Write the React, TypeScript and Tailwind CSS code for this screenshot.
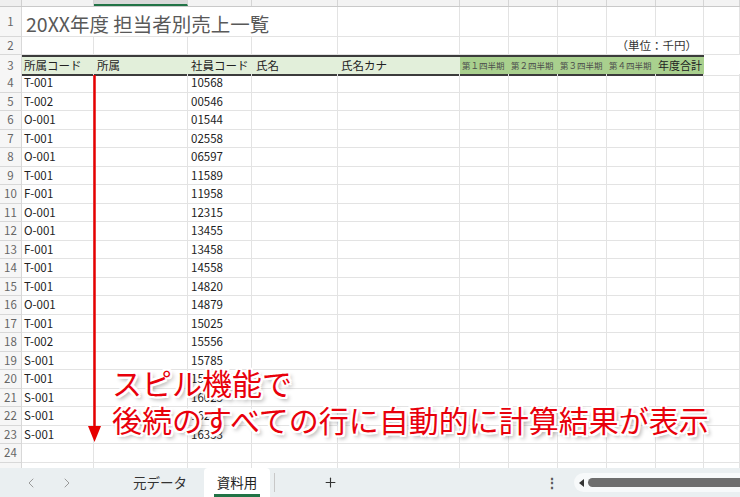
import React from 'react';
import { ChevronLeft, ChevronRight, Plus } from 'lucide-react';

const COLS = 'grid grid-cols-[22px_72px_94px_64px_86px_122px_49px_49px_49px_49px_48px_1fr]';
const FONT = "font-['Noto_Sans_CJK_JP','Noto_Sans',sans-serif]";

const rows: [string, string][] = [
  ['T-001', '10568'],
  ['T-002', '00546'],
  ['O-001', '01544'],
  ['T-001', '02558'],
  ['O-001', '06597'],
  ['T-001', '11589'],
  ['F-001', '11958'],
  ['O-001', '12315'],
  ['O-001', '13455'],
  ['F-001', '13458'],
  ['T-001', '14558'],
  ['T-001', '14820'],
  ['O-001', '14879'],
  ['T-001', '15025'],
  ['T-002', '15556'],
  ['S-001', '15785'],
  ['T-001', '15898'],
  ['S-001', '16025'],
  ['S-001', '16258'],
  ['S-001', '16353'],
];

const quarters = ['第１四半期', '第２四半期', '第３四半期', '第４四半期'];

const Cell: React.FC<{ children?: React.ReactNode; className?: string }> = ({ children, className = '' }) => (
  <div
    className={`border-r border-b border-[#e3e3e3] px-[2px] flex items-center overflow-hidden whitespace-nowrap text-[11.5px] text-[#222] ${className}`}
  >
    {children}
  </div>
);

const RowNum: React.FC<{ n?: number }> = ({ n }) => (
  <div className="border-r border-b border-[#d8d8d8] bg-[#f6f6f6] flex items-center justify-center text-[11.5px] text-[#666]">
    {n}
  </div>
);

const EmptyCells: React.FC<{ count: number }> = ({ count }) => (
  <>
    {Array.from({ length: count }).map((_, i) => (
      <Cell key={i} />
    ))}
  </>
);

export default function App() {
  return (
    <div className={`relative w-[740px] h-[497px] overflow-hidden bg-white flex flex-col ${FONT}`}>
      {/* column letters (cut off) */}
      <div className={`${COLS} h-[7px] shrink-0 border-b border-[#c9c9c9]`}>
        <div className="bg-[#efefef] border-r border-[#d0d0d0]" />
        <div className="bg-[#f3f3f3] border-r border-[#d5d5d5]" />
        <div className="bg-[#d9d9d9] border-r border-[#d5d5d5] border-b-2 border-b-[#217346]" />
        {Array.from({ length: 9 }).map((_, i) => (
          <div key={i} className="bg-[#f3f3f3] border-r border-[#d5d5d5]" />
        ))}
      </div>

      <div className="flex-1 overflow-hidden">
        {/* row 1 */}
        <div className={`${COLS} h-[30px]`}>
          <RowNum n={1} />
          <div className="col-span-4 border-r border-b border-[#e3e3e3] flex items-end pl-[4px] pb-[3px] text-[19.5px] leading-none text-[#595959] whitespace-nowrap">
            20XX年度 担当者別売上一覧
          </div>
          <EmptyCells count={7} />
        </div>

        {/* row 2 */}
        <div className={`${COLS} h-[18px]`}>
          <RowNum n={2} />
          <EmptyCells count={8} />
          <div className="col-span-2 border-r border-b border-[#e3e3e3] flex items-center justify-end pr-[6px] text-[11.5px] text-[#333] whitespace-nowrap">
            （単位：千円）
          </div>
          <EmptyCells count={1} />
        </div>

        {/* row 3 header */}
        <div className={`${COLS} h-[19px]`}>
          <RowNum n={3} />
          <div className="col-span-5 grid grid-cols-[72px_94px_64px_86px_122px] bg-[#e2efda] border-y-2 border-[#3b3b3b] text-[11.5px] text-[#222] whitespace-nowrap">
            <div className="pl-[2px] flex items-center">所属コード</div>
            <div className="pl-[3px] flex items-center">所属</div>
            <div className="pl-[3px] flex items-center">社員コード</div>
            <div className="pl-[4px] flex items-center">氏名</div>
            <div className="pl-[3px] flex items-center">氏名カナ</div>
          </div>
          <div className="col-span-5 grid grid-cols-[49px_49px_49px_49px_48px] bg-[#a9d08e] border-y-2 border-[#3b3b3b] whitespace-nowrap">
            {quarters.map((q) => (
              <div key={q} className="flex items-center pl-[2px] text-[8.5px] text-[#4d4d4d]">
                {q}
              </div>
            ))}
            <div className="flex items-center pl-[2px] text-[11px] text-[#222]">年度合計</div>
          </div>
          <div className="border-b border-[#e3e3e3]" />
        </div>

        {/* data rows */}
        {rows.map(([code, num], i) => (
          <div key={i} className={`${COLS} h-[18.5px]`}>
            <RowNum n={i + 4} />
            <Cell>{code}</Cell>
            <Cell />
            <Cell className="pl-[3px]">{num}</Cell>
            <EmptyCells count={8} />
          </div>
        ))}

        <div className={`${COLS} h-[18.5px]`}>
          <RowNum n={24} />
          <EmptyCells count={11} />
        </div>
        <div className={`${COLS} h-[18.5px]`}>
          <RowNum />
          <EmptyCells count={11} />
        </div>
      </div>

      {/* sheet tab bar */}
      <div className="h-[29px] shrink-0 bg-[#eaeff1] flex items-stretch text-[#333]">
        <div className="w-[204px] flex items-center">
          <ChevronLeft className="w-4 h-4 ml-[23px] text-[#9a9a9a]" strokeWidth={1.5} />
          <ChevronRight className="w-4 h-4 ml-[20px] text-[#9a9a9a]" strokeWidth={1.5} />
          <span className="ml-auto mr-[17px] text-[13.5px]">元データ</span>
        </div>
        <div className="w-[66px] bg-white rounded-t-[4px] flex flex-col items-center justify-end">
          <span className="text-[13.5px] leading-none mb-[5px] text-[#222]">資料用</span>
          <div className="w-[46px] h-[3px] bg-[#217346]" />
        </div>
        <div className="w-px bg-[#c8c8c8] my-[5px] ml-[4px]" />
        <div className="w-[267px] flex items-center">
          <Plus className="w-[15px] h-[15px] ml-[48px] text-[#333]" strokeWidth={1.8} />
        </div>
        <div className="flex items-center w-[20px] justify-center text-[#555] text-[14px] font-bold">⋮</div>
        <div className="flex-1 ml-[12px] my-[5px] bg-[#f7f9fa] rounded-l-full flex items-center pl-[5px]">
          <span className="w-0 h-0 border-y-[4px] border-y-transparent border-r-[5px] border-r-[#333]" />
          <div className="flex-1 h-[9px] ml-[4px] bg-[#6e6e6e] rounded-l-full" />
        </div>
      </div>

      {/* red annotation arrow */}
      <svg className="absolute left-[86px] top-[74px]" width="16" height="370" viewBox="0 0 16 370">
        <line x1="8.5" y1="1" x2="8.5" y2="356" stroke="#e60000" strokeWidth="2.5" />
        <polygon points="2,352 15,352 8.5,368" fill="#e60000" />
      </svg>

      {/* annotation text */}
      <div className="absolute left-[112px] top-[364px] text-[30px] leading-[37px] text-[#e8000b] whitespace-nowrap [text-shadow:2px_0_0_#fff,-2px_0_0_#fff,0_2px_0_#fff,0_-2px_0_#fff,2px_2px_0_#fff,-2px_-2px_0_#fff,2px_-2px_0_#fff,-2px_2px_0_#fff,3px_3px_4px_rgba(0,0,0,0.45)]">
        <div>スピル機能で</div>
        <div>後続のすべての行に自動的に計算結果が表示</div>
      </div>
    </div>
  );
}
